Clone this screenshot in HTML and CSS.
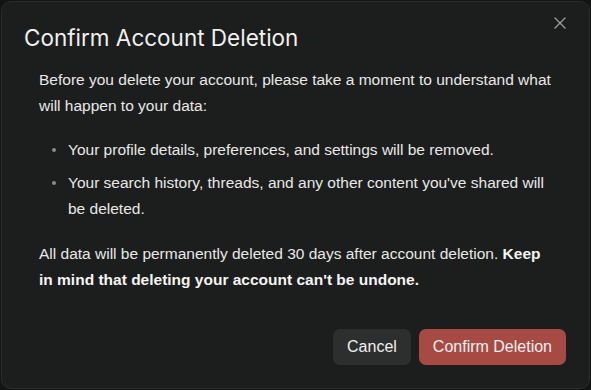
FILE: index.html
```html
<!DOCTYPE html>
<html>
<head>
    <meta charset="UTF-8">
    <title>Confirm Account Deletion</title>
    <link rel="stylesheet" href="styles.css">
</head>
<body>
    <div class="dialog">
        <button class="close" aria-label="Close">
            <svg width="12" height="12" viewBox="0 0 12 12"><path d="M1 1L11 11M11 1L1 11" stroke="currentColor" stroke-width="1.3" stroke-linecap="round"/></svg>
        </button>
        <h1>Confirm Account Deletion</h1>

        <div class="content">
            <p>Before you delete your account, please take a moment to understand what will happen to your data:</p>
            <ul>
                <li>Your profile details, preferences, and settings will be removed.</li>
                <li>Your search history, threads, and any other content you've shared will be deleted.</li>
            </ul>
            <p>All data will be permanently deleted 30 days after account deletion. <strong>Keep in mind that deleting your account can't be undone.</strong></p>
        </div>

        <div class="actions">
            <button class="btn cancel">Cancel</button>
            <button class="btn danger">Confirm Deletion</button>
        </div>
    </div>
</body>
</html>
```

FILE: styles.css
```css
html, body { height: 100%; }
body { margin: 0; padding: 1px; box-sizing: border-box; background: #131414; font-family: "Liberation Sans", Arial, sans-serif; color: #e8e8e6; }
.dialog { position: relative; box-sizing: border-box; height: 100%; background: #1c1d1d; border: 1px solid #2a2b2b; border-radius: 10px; padding: 21px 23px 0 22px; display: flex; flex-direction: column; }
.close { position: absolute; top: 14px; right: 22px; width: 14px; height: 14px; padding: 0; background: none; border: none; color: #9c9d9c; display: flex; align-items: center; justify-content: center; cursor: pointer; }
h1 { margin: 0; font-family: Inter, "Liberation Sans", sans-serif; font-weight: 400; font-size: 22.5px; line-height: 30px; color: #f0f0ee; }
.content { padding: 0 14px 0 15px; font-size: 15.5px; line-height: 26px; }
.content p { margin: 14px 0 0; }
.content ul { list-style: none; margin: 18px 0 0; padding-left: 29px; }
.content li { position: relative; margin-bottom: 7px; }
.content li::before { content: ""; position: absolute; left: -16px; top: 11px; width: 4px; height: 4px; border-radius: 50%; background: #8a8b8a; }
.content ul + p { margin-top: 19px; }
strong { font-weight: 700; color: #f4f4f2; }
.actions { margin-top: auto; padding-bottom: 23px; display: flex; justify-content: flex-end; gap: 8px; }
.btn { height: 36px; padding: 0 14px; border: none; border-radius: 7px; font-family: "Liberation Sans", Arial, sans-serif; font-size: 16px; color: #f0f0ee; cursor: pointer; }
.cancel { background: #2d2e2e; }
.danger { background: #a84a44; }
```
